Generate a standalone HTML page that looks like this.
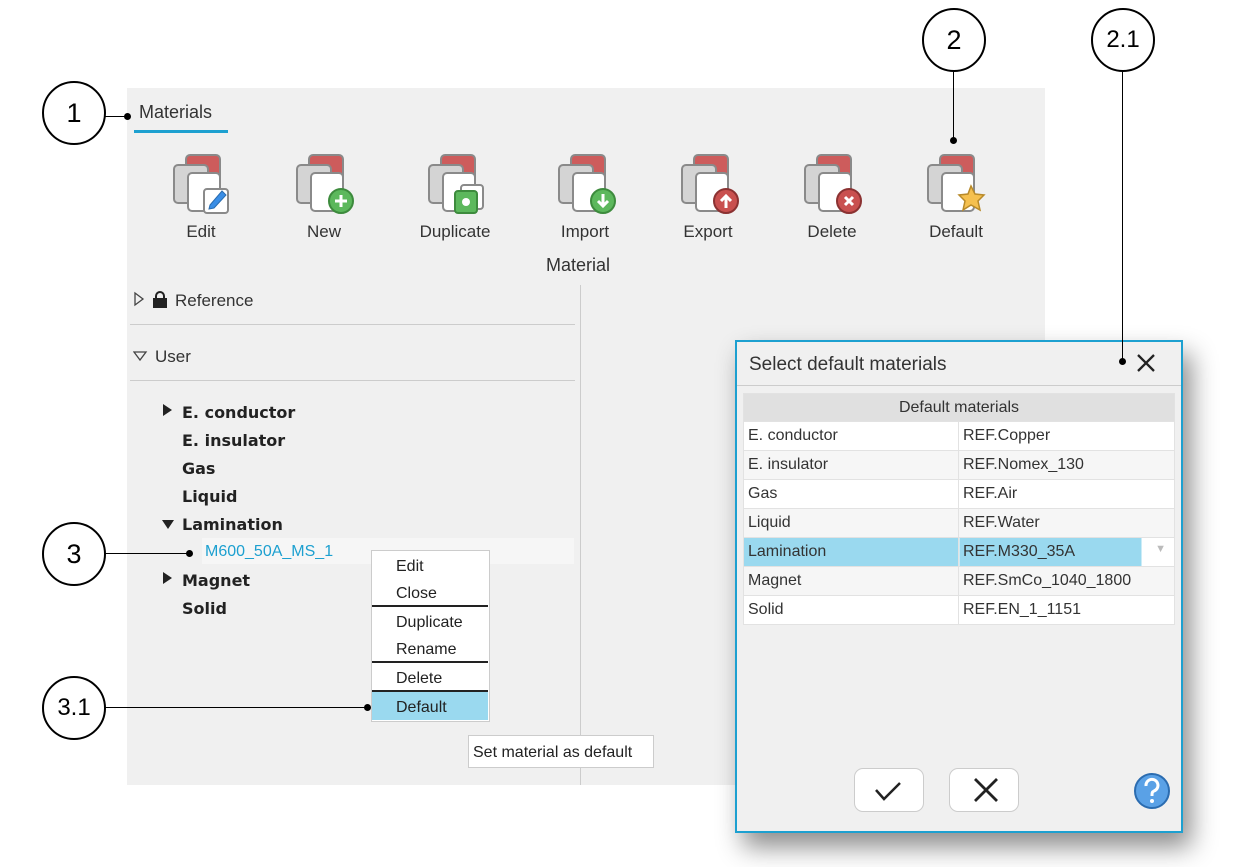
<!DOCTYPE html>
<html><head><style>
body{margin:0;width:1247px;height:867px;background:#fff;position:relative;overflow:hidden;font-family:"Liberation Sans",Arial,sans-serif;color:#222}
.a{position:absolute}
.circ{position:absolute;width:60px;height:60px;border:2px solid #000;border-radius:50%;background:#fff;font-size:27px;text-align:center;line-height:60px;color:#000}
.ln{position:absolute;background:#000}
.dot{position:absolute;width:7px;height:7px;border-radius:50%;background:#000}
.lbl{position:absolute;font-size:17px;color:#333;text-align:center;width:120px}
.tree{position:absolute;font-family:"DejaVu Sans",sans-serif;font-weight:bold;font-size:16px;color:#222}
.mi{position:absolute;left:396px;font-size:16px;color:#222}
table{border-collapse:collapse;font-size:16px;color:#333}
td{height:28px;padding:0 0 0 4px;border:1px solid #e2e2e2}
</style></head><body>
<div class="a" style="left:127px;top:88px;width:918px;height:697px;background:#f0f0f0"></div>
<div class="a" style="left:139px;top:102px;font-size:18px;color:#333">Materials</div>
<div class="a" style="left:134px;top:130px;width:94px;height:3px;background:#1da0d0"></div>
<svg class="a" style="left:0;top:0" width="1247" height="300">
<defs>
<g id="ic">
<rect x="14" y="2" width="34" height="36" rx="4" fill="#cd5c5c" stroke="#8a8a8a" stroke-width="2"/>
<rect x="2" y="12" width="34" height="38" rx="4" fill="#d4d4d4" stroke="#8a8a8a" stroke-width="2"/>
<rect x="16" y="20" width="32" height="38" rx="4" fill="#fff" stroke="#8a8a8a" stroke-width="2"/>
</g>
</defs>
<g transform="translate(172,153)"><use href="#ic"/><rect x="32" y="36" width="24" height="24" rx="3" fill="#fff" stroke="#8a8a8a" stroke-width="2"/><path d="M38 52 L50 38 L54 42 L42 55 L37 56Z" fill="#3a8ee6" stroke="#2a6db0"/></g>
<g transform="translate(295,153)"><use href="#ic"/><circle cx="46" cy="48" r="12" fill="#5cb85c" stroke="#3d8b3d" stroke-width="2"/><path d="M46 42v12M40 48h12" stroke="#fff" stroke-width="3"/></g>
<g transform="translate(427,153)"><use href="#ic"/><rect x="34" y="32" width="22" height="24" rx="3" fill="#fff" stroke="#8a8a8a" stroke-width="2"/><rect x="28" y="38" width="22" height="22" rx="3" fill="#5cb85c" stroke="#3d8b3d" stroke-width="2"/><circle cx="39" cy="49" r="4" fill="#fff"/></g>
<g transform="translate(557,153)"><use href="#ic"/><circle cx="46" cy="48" r="12" fill="#5cb85c" stroke="#3d8b3d" stroke-width="2"/><path d="M46 41v12M41 48l5 5 5-5" stroke="#fff" stroke-width="3" fill="none"/></g>
<g transform="translate(680,153)"><use href="#ic"/><circle cx="46" cy="48" r="12" fill="#c9504f" stroke="#8b3232" stroke-width="2"/><path d="M46 55v-12M41 48l5-5 5 5" stroke="#fff" stroke-width="3" fill="none"/></g>
<g transform="translate(803,153)"><use href="#ic"/><circle cx="46" cy="48" r="12" fill="#c9504f" stroke="#8b3232" stroke-width="2"/><path d="M42 44l8 8M50 44l-8 8" stroke="#fff" stroke-width="3"/></g>
<g transform="translate(926,153)"><use href="#ic"/><path d="M45 33l4 8 9 1-6 6 2 9-9-5-8 5 2-9-6-6 9-1z" fill="#f5c04f" stroke="#b88a2a" stroke-width="1.5"/></g>
</svg>
<div class="lbl" style="left:141px;top:222px">Edit</div>
<div class="lbl" style="left:264px;top:222px">New</div>
<div class="lbl" style="left:395px;top:222px">Duplicate</div>
<div class="lbl" style="left:525px;top:222px">Import</div>
<div class="lbl" style="left:648px;top:222px">Export</div>
<div class="lbl" style="left:772px;top:222px">Delete</div>
<div class="lbl" style="left:896px;top:222px">Default</div>
<div class="lbl" style="left:518px;top:255px;font-size:18px">Material</div>
<div class="a" style="left:580px;top:285px;width:1px;height:500px;background:#ccc"></div>
<div class="a" style="left:130px;top:324px;width:445px;height:1px;background:#ccc"></div>
<div class="a" style="left:130px;top:380px;width:445px;height:1px;background:#ccc"></div>
<svg class="a" style="left:133px;top:290px" width="40" height="80"><path d="M2 3l8 6-8 6z" fill="none" stroke="#444" stroke-width="1.3"/><rect x="20" y="8" width="14" height="10" fill="#222"/><path d="M23 9v-3a4 4 0 0 1 8 0v3" stroke="#222" stroke-width="2" fill="none"/><path d="M1 62h12l-6 8z" fill="none" stroke="#444" stroke-width="1.3"/></svg>
<div class="a" style="left:175px;top:291px;font-size:17px;color:#333">Reference</div>
<div class="a" style="left:155px;top:347px;font-size:17px;color:#333">User</div>
<svg class="a" style="left:160px;top:401px" width="20" height="190"><path d="M3 3l9 6-9 6z M2 119h12l-6 9z M3 171l9 6-9 6z" fill="#222"/></svg>
<div class="tree" style="left:182px;top:403px">E. conductor</div>
<div class="tree" style="left:182px;top:431px">E. insulator</div>
<div class="tree" style="left:182px;top:459px">Gas</div>
<div class="tree" style="left:182px;top:487px">Liquid</div>
<div class="tree" style="left:182px;top:515px">Lamination</div>
<div class="a" style="left:202px;top:538px;width:372px;height:26px;background:#f6f6f6"></div>
<div class="a" style="left:205px;top:543px;font-size:16px;color:#1da0d0">M600_50A_MS_1</div>
<div class="tree" style="left:182px;top:571px">Magnet</div>
<div class="tree" style="left:182px;top:599px">Solid</div>
<div class="a" style="left:371px;top:550px;width:117px;height:170px;background:#fff;border:1px solid #ccc"></div>
<div class="a" style="left:372px;top:605px;width:116px;height:2px;background:#222"></div>
<div class="a" style="left:372px;top:661px;width:116px;height:2px;background:#222"></div>
<div class="a" style="left:372px;top:690px;width:116px;height:2px;background:#222"></div>
<div class="a" style="left:372px;top:692px;width:116px;height:28px;background:#9ad9ef"></div>
<div class="mi" style="top:558px">Edit</div>
<div class="mi" style="top:585px">Close</div>
<div class="mi" style="top:614px">Duplicate</div>
<div class="mi" style="top:641px">Rename</div>
<div class="mi" style="top:670px">Delete</div>
<div class="mi" style="top:699px">Default</div>
<div class="a" style="left:468px;top:735px;width:186px;height:33px;background:#fff;border:1px solid #ccc;font-size:16px;line-height:34px;padding-left:4px;box-sizing:border-box;color:#222">Set material as default</div>
<div class="a" style="left:735px;top:340px;width:444px;height:489px;background:#f0f0f0;border:2px solid #1da0d0;box-shadow:8px 14px 24px rgba(0,0,0,.45)"></div>
<div class="a" style="left:737px;top:385px;width:444px;height:1px;background:#ccc"></div>
<div class="a" style="left:749px;top:354px;font-size:19px;color:#333">Select default materials</div>
<svg class="a" style="left:1136px;top:353px" width="20" height="20"><path d="M2 2l16 16M18 2L2 18" stroke="#222" stroke-width="2.3"/></svg>
<table class="a" style="left:743px;top:393px;width:432px;background:#fff">
<tr><td colspan="2" style="background:#e0e0e0;text-align:center;padding:0;height:27px">Default materials</td></tr>
<tr><td style="width:210px">E. conductor</td><td>REF.Copper</td></tr>
<tr style="background:#f6f6f6"><td>E. insulator</td><td>REF.Nomex_130</td></tr>
<tr><td>Gas</td><td>REF.Air</td></tr>
<tr style="background:#f6f6f6"><td>Liquid</td><td>REF.Water</td></tr>
<tr><td style="background:#9ad9ef">Lamination</td><td style="background:linear-gradient(90deg,#9ad9ef 182px,#fff 182px)">REF.M330_35A<span style="float:right;color:#bbb;font-size:11px;padding-right:8px">▼</span></td></tr>
<tr style="background:#f6f6f6"><td>Magnet</td><td>REF.SmCo_1040_1800</td></tr>
<tr><td>Solid</td><td>REF.EN_1_1151</td></tr>
</table>
<div class="a" style="left:854px;top:768px;width:68px;height:42px;background:#fff;border:1px solid #ccc;border-radius:9px"></div>
<div class="a" style="left:949px;top:768px;width:68px;height:42px;background:#fff;border:1px solid #ccc;border-radius:9px"></div>
<svg class="a" style="left:854px;top:768px" width="170" height="44"><path d="M22 22l8 9 16-16" stroke="#222" stroke-width="2.5" fill="none"/><path d="M121 11l22 22M143 11l-22 22" stroke="#222" stroke-width="2.8"/></svg>
<svg class="a" style="left:1132px;top:771px" width="40" height="40"><circle cx="20" cy="20" r="17" fill="#5aa1e6" stroke="#2b6cb0" stroke-width="2"/><path d="M14 15a6 6 0 1 1 8 5c-2 1-2 2-2 5" stroke="#fff" stroke-width="3" fill="none"/><circle cx="20" cy="30" r="2" fill="#fff"/></svg>
<div class="ln" style="left:104px;top:116px;width:24px;height:1px"></div><div class="dot" style="left:124px;top:113px"></div>
<div class="circ" style="left:42px;top:81px">1</div>
<div class="ln" style="left:953px;top:68px;width:1px;height:72px"></div><div class="dot" style="left:950px;top:137px"></div>
<div class="circ" style="left:922px;top:8px">2</div>
<div class="ln" style="left:1122px;top:68px;width:1px;height:294px"></div><div class="dot" style="left:1119px;top:358px"></div>
<div class="circ" style="left:1091px;top:8px;font-size:24px">2.1</div>
<div class="ln" style="left:104px;top:553px;width:88px;height:1px"></div><div class="dot" style="left:186px;top:550px"></div>
<div class="circ" style="left:42px;top:522px">3</div>
<div class="ln" style="left:104px;top:707px;width:266px;height:1px"></div><div class="dot" style="left:364px;top:704px"></div>
<div class="circ" style="left:42px;top:676px;font-size:24px">3.1</div>
</body></html>
